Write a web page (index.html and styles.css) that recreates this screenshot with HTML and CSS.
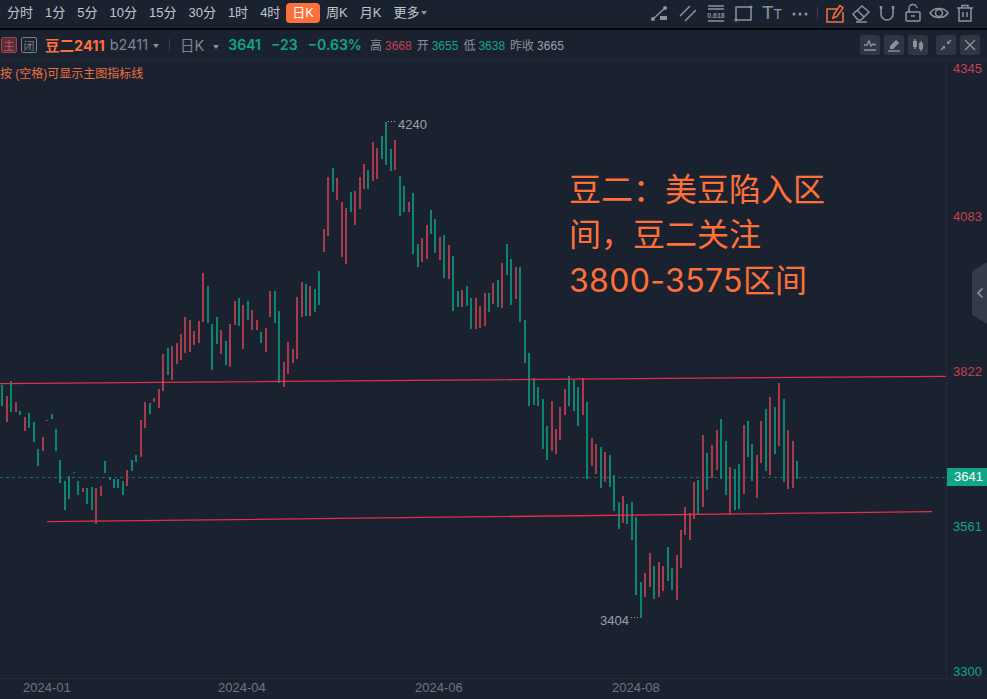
FILE: index.html
```html
<!DOCTYPE html>
<html lang="zh-CN">
<head>
    <meta charset="UTF-8">
    <title>豆二2411 日K</title>
    <link rel="stylesheet" href="styles.css">
</head>
<body>
    <div class="toolbar">
        <div class="periods">
            <span class="period">分时</span>
            <span class="period">1分</span>
            <span class="period">5分</span>
            <span class="period">10分</span>
            <span class="period">15分</span>
            <span class="period">30分</span>
            <span class="period">1时</span>
            <span class="period">4时</span>
            <span class="period active">日K</span>
            <span class="period">周K</span>
            <span class="period">月K</span>
            <span class="period">更多<i class="caret small"></i></span>
        </div>
        <div class="tools">
            <div class="tool-group">
                <svg class="icon" viewBox="0 0 20 20"><path d="M3 16L15 5"/><circle class="solid" cx="3" cy="16" r="2"/><circle class="solid" cx="15" cy="5" r="2"/><rect class="solid" x="10" y="13" width="7" height="4"/></svg>
                <svg class="icon" viewBox="0 0 20 20"><path d="M2 13L12 3M7 18L18 7"/></svg>
                <svg class="icon" viewBox="0 0 20 20"><path d="M2 3H18M2 6H18M2 18H18"/><text class="fib" x="10" y="14.5">0.618</text></svg>
                <svg class="icon" viewBox="0 0 20 20"><rect x="2" y="4" width="15" height="13"/><circle class="solid" cx="2" cy="17" r="1.5"/><circle class="solid" cx="17" cy="4" r="1.5"/></svg>
                <span class="icon text-icon"><b>T</b><em>T</em></span>
                <svg class="icon" viewBox="0 0 20 20"><circle class="solid" cx="4" cy="11" r="1.5"/><circle class="solid" cx="10" cy="11" r="1.5"/><circle class="solid" cx="16" cy="11" r="1.5"/></svg>
            </div>
            <i class="tool-sep"></i>
            <div class="tool-group narrow">
                <svg class="icon hot" viewBox="0 0 20 20"><path d="M12 6H2V19H18V9"/><path d="M8 15L9 11L15 2.500L18 5L12 13.500Z"/></svg>
                <svg class="icon" viewBox="0 0 20 20"><path d="M2 11L11 3L18 9L10 17H7ZM5 19H16M6 7L13 14"/></svg>
                <svg class="icon" viewBox="0 0 20 20"><path d="M4 4V11A6 6 0 0 0 16 11V4"/><path class="thick" d="M4 3V6M16 3V6"/></svg>
                <svg class="icon" viewBox="0 0 20 20"><path d="M6 9V6A4 4 0 0 1 14 5"/><rect x="3" y="9" width="14" height="9" rx="1"/><path d="M8 13H12"/></svg>
                <svg class="icon" viewBox="0 0 20 20"><path d="M1 10C5 4 15 4 19 10C15 16 5 16 1 10Z"/><circle cx="10" cy="10" r="3.500"/></svg>
                <svg class="icon" viewBox="0 0 20 20"><path d="M2 5H18M7 5V2.500H13V5M4 5V18H16V5M8 9V14M12 9V14"/></svg>
            </div>
        </div>
    </div>

    <div class="infobar">
        <span class="tag tag-main">主</span>
        <span class="tag tag-close">闭</span>
        <span class="symbol">豆二2411</span>
        <span class="code">b2411<i class="caret"></i></span>
        <i class="info-sep"></i>
        <span class="code period-name">日K<i class="caret"></i></span>
        <span class="quote">3641</span>
        <span class="quote">−23</span>
        <span class="quote">−0.63%</span>
        <span class="stat">高<b class="red">3668</b></span>
        <span class="stat">开<b class="green">3655</b></span>
        <span class="stat">低<b class="green">3638</b></span>
        <span class="stat">昨收<b>3665</b></span>
        <div class="info-buttons">
            <button class="mini"><svg viewBox="0 0 14 14"><path d="M1 7L4 7L6 3L8 8L10 6L13 7M1 12H13"/></svg></button>
            <button class="mini"><svg viewBox="0 0 14 14"><path class="fill" d="M3 8L9 2L12 5L6 11H3Z"/><path d="M1 13H13"/></svg></button>
            <button class="mini"><svg viewBox="0 0 14 14"><path class="fill" d="M2 3H6V9H2ZM8 5H12V11H8Z"/><path d="M4 1V11M10 3V13"/></svg></button>
            <button class="mini spaced"><svg viewBox="0 0 14 14"><path d="M2 12L5.500 8.500M8.500 5.500L12 2"/><path class="fill" d="M8 3V6H11ZM3 8H6V11Z"/></svg></button>
            <button class="mini"><svg viewBox="0 0 14 14"><path d="M2 2L12 12M12 2L2 12"/></svg></button>
        </div>
    </div>

    <div class="chart">
        <svg class="plot" viewBox="0 60 987 639">
            <path class="frame" d="M946.500 60V678M0 678.500H987"/>
            <path class="last-line" d="M0 477.500H946"/>
            <path class="bar down" d="M2 385V406M11 381V412M20 411V415M29 413V428M34 422V442M38 449V466M52 414V419M56 429V451M60 460V483M65 481V510M69 476V499M74 472V473M78 481V495M87 488V504M92 487V510M105 461V473M110 477V480M114 479V488M118 479V488M123 481V495M132 460V471M136 455V462M150 403V414M168 348V375M208 286V323M212 324V370M217 317V344M226 341V365M239 298V326M248 301V320M261 332V343M275 291V323M279 311V383M306 284V316M315 289V312M319 271V305M333 168V192M351 192V212M368 170V189M382 136V159M386 122V165M391 149V171M400 176V216M404 186V212M413 193V254M418 244V267M431 210V234M435 219V253M444 235V278M453 256V311M458 291V307M467 286V306M471 298V329M489 293V312M498 280V307M507 244V275M511 259V305M520 267V322M525 320V363M529 353V406M534 378V405M538 387V406M543 399V449M547 426V460M569 376V406M574 380V411M578 387V426M587 402V479M601 447V488M610 455V487M614 475V511M619 502V529M627 504V524M632 502V540M636 517V595M641 582V618M654 566V599M668 547V581M672 568V590M698 480V514M707 453V490M721 419V479M726 441V495M735 469V510M739 464V509M748 421V457M752 444V481M766 409V471M775 407V454M784 399V482M797 461V479"/>
            <path class="bar up" d="M7 396V422M16 402V412M25 417V431M43 437V451M47 420V421M83 488V492M96 488V524M101 486V496M127 470V486M141 420V457M145 402V428M154 398V402M159 389V408M163 354V391M172 346V380M177 343V364M181 334V360M185 317V353M190 320V352M194 331V345M199 321V343M203 273V322M221 330V354M230 324V367M235 301V325M243 305V349M252 310V330M257 320V330M266 328V352M270 291V317M284 362V387M288 342V374M293 349V363M297 297V359M302 282V317M310 286V316M324 229V252M328 177V236M337 178V200M342 202V257M346 208V264M355 191V225M360 177V209M364 164V189M373 142V181M377 148V179M395 140V170M409 202V212M422 238V262M427 225V259M440 237V260M449 245V279M462 290V307M476 298V329M480 306V328M485 293V326M493 283V304M502 263V308M516 267V299M552 401V451M556 429V454M560 407V440M565 389V415M583 378V415M592 438V466M596 444V474M605 452V482M623 496V523M645 573V597M650 553V587M659 562V597M663 566V591M677 555V600M681 530V568M685 507V535M690 513V540M694 482V519M703 435V507M712 445V478M717 430V470M730 467V515M744 425V494M757 455V498M761 421V463M770 397V475M779 383V446M788 430V489M793 441V488"/>
            <path class="trend" d="M0 383.600L946 376.300M47 521.700L932 511.700"/>
            <path class="extreme-dots" d="M388 121.500H397M631 617.500H640"/>
            <text class="extreme" x="398" y="129">4240</text>
            <text class="extreme" x="600" y="625">3404</text>
            <text class="price up-text" x="953" y="73">4345</text>
            <text class="price up-text" x="953" y="221">4083</text>
            <text class="price up-text" x="953" y="376">3822</text>
            <text class="price down-text" x="953" y="531">3561</text>
            <text class="price down-text" x="953" y="676">3300</text>
            <text class="date" x="23" y="692">2024-01</text>
            <text class="date" x="218" y="692">2024-04</text>
            <text class="date" x="415" y="692">2024-06</text>
            <text class="date" x="612" y="692">2024-08</text>
        </svg>
        <div class="hint">按 (空格)可显示主图指标线</div>
        <div class="note">豆二：美豆陷入区间，豆二关注<span class="note-num">3800-3575</span>区间</div>
        <div class="last-price">3641</div>
        <div class="side-tab"><svg viewBox="0 0 8 12"><path d="M6.500 1.500L2 6L6.500 10.500"/></svg></div>
    </div>
</body>
</html>
```

FILE: styles.css
```css
* {
    box-sizing: border-box;
}

body {
    margin: 0;
    height: 699px;
    overflow: hidden;
    background-color: #1a2230;
    color: #9ba1ab;
    font-family: "Liberation Sans", "Noto Sans CJK SC", sans-serif;
}

/* top toolbar */
.toolbar {
    display: flex;
    justify-content: space-between;
    align-items: center;
    height: 30px;
    padding: 0 12px 2px 0;
    border-bottom: 2px solid #05070a;
}

.periods {
    display: flex;
    align-items: center;
    font-size: 13px;
    color: #c3c7cd;
}

.period {
    display: flex;
    align-items: center;
    padding: 0 6px;
    line-height: 20px;
    white-space: nowrap;
}

.period:first-child {
    padding-left: 7px;
}

.period.active {
    background-color: #ff6f3c;
    border-radius: 4px;
    color: #fff;
}

.caret {
    display: inline-block;
    margin-left: 4px;
    border: 3px solid transparent;
    border-top: 4px solid #8a909b;
    border-bottom: 0;
}

.caret.small {
    margin-left: 2px;
}

.tools {
    display: flex;
    align-items: center;
}

.tool-group {
    display: flex;
    gap: 8px;
}

.tool-group.narrow {
    gap: 6px;
}

.tool-sep {
    width: 1px;
    height: 12px;
    margin: 0 7px;
    background-color: #3a4350;
}

.icon {
    width: 20px;
    height: 20px;
    fill: none;
    stroke: #8d939e;
    stroke-width: 1.5;
}

.icon.hot {
    stroke: #ff6f3c;
}

.icon .solid {
    fill: #8d939e;
    stroke: none;
}

.icon .thick {
    stroke-width: 2.5;
}

.icon .fib {
    fill: #8d939e;
    stroke: none;
    font-size: 7px;
    font-weight: bold;
    text-anchor: middle;
}

.text-icon {
    display: flex;
    align-items: baseline;
    justify-content: center;
    color: #8d939e;
    line-height: 20px;
}

.text-icon b {
    font-size: 19px;
    font-weight: normal;
}

.text-icon em {
    font-size: 14px;
    font-style: normal;
}

/* quote line */
.infobar {
    display: flex;
    align-items: center;
    height: 30px;
    padding-left: 1px;
    border-bottom: 1px solid #212b38;
    font-family: Inter, "Noto Sans CJK SC", sans-serif;
    font-size: 14.5px;
    white-space: nowrap;
}

.tag {
    display: flex;
    align-items: center;
    justify-content: center;
    width: 16px;
    height: 16px;
    border: 1px solid;
    border-radius: 2px;
    font-size: 11px;
}

.tag-main {
    border-color: #a83c4c;
    background-color: #57303e;
    color: #d0505e;
}

.tag-close {
    margin-left: 4px;
    border-color: #7b818c;
    color: #7b818c;
}

.symbol {
    margin-left: 8px;
    color: #ff6f3c;
    font-weight: 700;
}

.code {
    margin-left: 5px;
    color: #7f8591;
}

.code .caret {
    margin-left: 5px;
    vertical-align: middle;
}

.info-sep {
    width: 1px;
    height: 12px;
    margin: 0 10px;
    background-color: #3a4350;
}

.period-name {
    margin-left: 0;
}

.period-name .caret {
    margin-left: 9px;
}

.quote {
    margin-left: 10px;
    color: #0fa68a;
    font-size: 14px;
    font-weight: 600;
}

.period-name + .quote {
    margin-left: 9px;
}

.stat {
    margin-left: 5px;
    font-family: "Liberation Sans", "Noto Sans CJK SC", sans-serif;
    font-size: 12px;
    color: #8a909b;
}

.quote + .stat {
    margin-left: 8px;
}

.stat b {
    margin-left: 3px;
    font-weight: normal;
    color: #9ba1ab;
}

.stat .red {
    color: #c8404f;
}

.stat .green {
    color: #0fa68a;
}

.info-buttons {
    display: flex;
    gap: 4px;
    margin-left: auto;
    padding-right: 7px;
}

.mini {
    display: flex;
    align-items: center;
    justify-content: center;
    width: 20px;
    height: 20px;
    padding: 0;
    border: none;
    border-radius: 3px;
    background-color: #2e3744;
}

.mini.spaced {
    margin-left: 4px;
}

.mini svg {
    width: 14px;
    height: 14px;
    fill: none;
    stroke: #8d939e;
    stroke-width: 1.4;
}

.mini .fill {
    fill: #8d939e;
    stroke: none;
}

/* chart */
.chart {
    position: relative;
    height: 639px;
}

.plot {
    display: block;
    width: 987px;
    height: 639px;
}

.frame {
    fill: none;
    stroke: #222c39;
}

.last-line {
    fill: none;
    stroke: #1f6a62;
    stroke-dasharray: 3 3;
}

.bar {
    fill: none;
    stroke-width: 2;
}

.bar.up {
    stroke: #a83c4c;
}

.bar.down {
    stroke: #0c8672;
}

.trend {
    fill: none;
    stroke: #e62e44;
    stroke-width: 1.3;
}

.extreme-dots {
    fill: none;
    stroke: #9ba1ab;
    stroke-dasharray: 1 2;
}

.extreme {
    fill: #9ba1ab;
    font-size: 13px;
}

.price {
    font-size: 13px;
}

.up-text {
    fill: #c8404f;
}

.down-text {
    fill: #0fa68a;
}

.date {
    fill: #6f7580;
    font-size: 13px;
}

.hint {
    position: absolute;
    left: 0;
    top: 6px;
    font-size: 12px;
    line-height: 16px;
    color: #ec6f3e;
}

.note {
    position: absolute;
    left: 569px;
    top: 107px;
    width: 258px;
    font-family: Inter, "Noto Sans CJK SC", sans-serif;
    font-size: 32px;
    line-height: 45.3px;
    color: #ff7038;
}

.note-num {
    letter-spacing: 0.35px;
}

.last-price {
    position: absolute;
    left: 947px;
    top: 408px;
    width: 40px;
    height: 18px;
    padding-left: 7px;
    background-color: #0fa68a;
    color: #fff;
    font-size: 13px;
    line-height: 18px;
}

.side-tab {
    position: absolute;
    right: 0;
    top: 202px;
    display: flex;
    align-items: center;
    justify-content: center;
    width: 15px;
    height: 62px;
    background-color: #343a48;
    clip-path: polygon(100% 0, 100% 100%, 0 85%, 0 15%);
}

.side-tab svg {
    width: 8px;
    height: 12px;
    fill: none;
    stroke: #8d939e;
    stroke-width: 1.6;
}
```
